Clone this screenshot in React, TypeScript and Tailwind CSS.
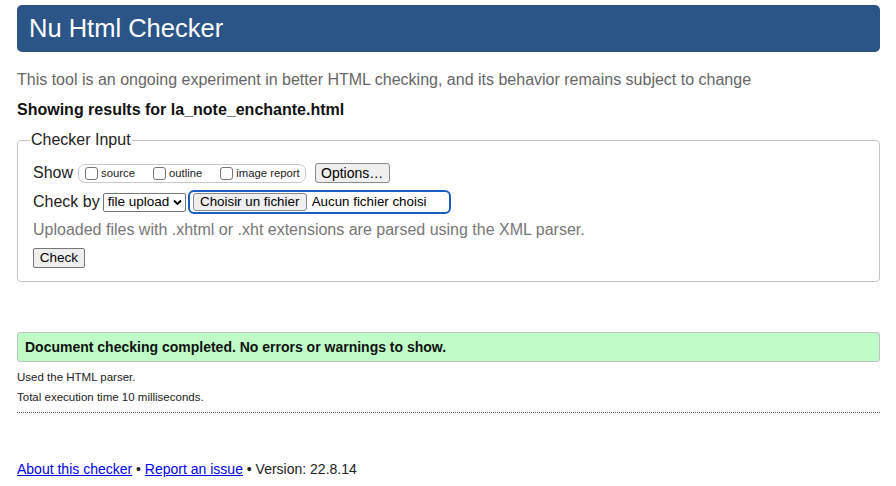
import React from "react";

function Box({ label }: { label: string }) {
  return (
    <span className="flex items-center">
      <span className="inline-block h-[13px] w-[13px] rounded-[3px] border border-[#767676] bg-white" />
      <span className="ml-[3px] text-[11.3px] leading-[14px] text-[#222]">{label}</span>
    </span>
  );
}

export default function App() {
  return (
    <div className="min-h-[486px] bg-white px-[17px] pt-[5px] font-['Liberation_Sans',Arial,sans-serif] text-black">
      <div className="flex h-[47px] w-[863px] items-center rounded-[5px] bg-[#2c5587] pl-[12px] text-[25.5px] text-white">
        Nu Html Checker
      </div>
      <p className="mt-[18px] text-[16px] leading-[20px] text-[#666]">
        This tool is an ongoing experiment in better HTML checking, and its behavior remains subject to change
      </p>
      <p className="mt-[10px] text-[16px] font-bold leading-[20px] text-[#111]">
        Showing results for la_note_enchante.html
      </p>
      <fieldset className="mt-[10px] w-[863px] rounded-[4px] border border-[#c4c4c4] px-[15px] pb-[13px]">
        <legend className="-ml-[3px] px-[1px] text-[16px] leading-[20px] text-[#222]">Checker Input</legend>
        <div className="mt-[11px] flex h-[24px] items-center">
          <span className="text-[16px] text-[#222]">Show</span>
          <div className="ml-[5px] flex h-[19px] items-center rounded-[7px] border border-[#c8c8c8] pl-[6px] pr-[5px]">
            <Box label="source" />
            <span className="w-[18px]" />
            <Box label="outline" />
            <span className="w-[18px]" />
            <Box label="image report" />
          </div>
          <button className="ml-[9px] h-[20px] w-[75px] rounded-[3px] border border-[#8a8a8a] bg-[#efefef] text-[14px] leading-[18px] text-black">
            Options…
          </button>
        </div>
        <div className="mt-[5px] flex h-[24px] items-center">
          <span className="text-[16px] text-[#222]">Check by</span>
          <div className="ml-[3px] flex h-[19px] w-[83px] items-center justify-between rounded-[2px] border border-[#767676] bg-white pl-[4px] pr-[3px]">
            <span className="text-[13.5px] leading-[16px]">file upload</span>
            <svg width="9" height="7" viewBox="0 0 9 7">
              <path d="M1 1.5 L4.5 5 L8 1.5" stroke="#000" strokeWidth="1.8" fill="none" />
            </svg>
          </div>
          <div className="ml-[2px] flex h-[24px] w-[263px] items-center rounded-[6px] border-2 border-[#1a5fc0] pl-[3px]">
            <span className="flex h-[18px] w-[114px] items-center justify-center rounded-[3px] border border-[#8a8a8a] bg-[#efefef] text-[13.33px] leading-[16px]">
              Choisir un fichier
            </span>
            <span className="ml-[5px] text-[13.33px] leading-[16px]">Aucun fichier choisi</span>
          </div>
        </div>
        <p className="mt-[6px] text-[16px] leading-[20px] text-[#777]">
          Uploaded files with .xhtml or .xht extensions are parsed using the XML parser.
        </p>
        <button className="mt-[8px] flex h-[20px] w-[52px] items-center justify-center rounded-[2px] border border-[#767676] bg-[#efefef] text-[13.5px] leading-[16px] text-black">
          Check
        </button>
      </fieldset>
      <div className="mt-[50px] flex h-[30px] w-[863px] items-center rounded-[3px] border border-[#c2c2c2] bg-[#bffcc8] pl-[7px] text-[14px] font-bold text-[#111]">
        Document checking completed. No errors or warnings to show.
      </div>
      <p className="mt-[8px] text-[11.5px] leading-[14px] text-[#222]">Used the HTML parser.</p>
      <p className="mt-[6px] text-[11.5px] leading-[14px] text-[#222]">Total execution time 10 milliseconds.</p>
      <div className="mt-[8px] w-[863px] border-b border-dotted border-[#555]" />
      <p className="mt-[47px] text-[14px] leading-[18px] text-[#222]">
        <a href="#" className="text-[#0000ee] underline">About this checker</a>
        {" • "}
        <a href="#" className="text-[#0000ee] underline">Report an issue</a>
        {" • Version: 22.8.14"}
      </p>
    </div>
  );
}
